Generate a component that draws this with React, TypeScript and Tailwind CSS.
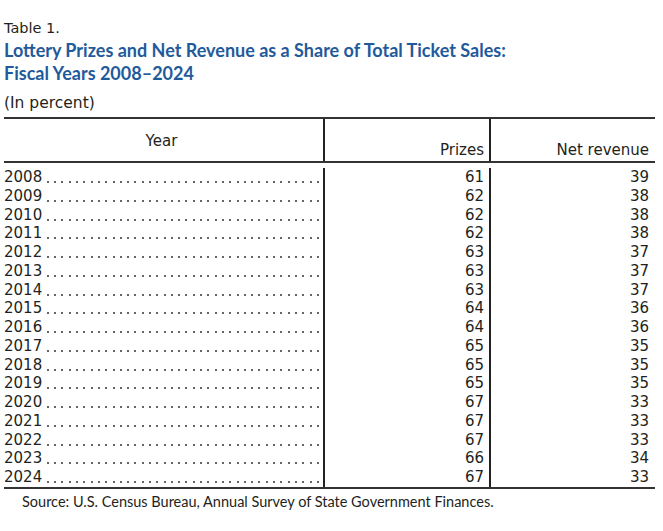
const rows: [number, number, number][] = [
  [2008, 61, 39],
  [2009, 62, 38],
  [2010, 62, 38],
  [2011, 62, 38],
  [2012, 63, 37],
  [2013, 63, 37],
  [2014, 63, 37],
  [2015, 64, 36],
  [2016, 64, 36],
  [2017, 65, 35],
  [2018, 65, 35],
  [2019, 65, 35],
  [2020, 67, 33],
  [2021, 67, 33],
  [2022, 67, 33],
  [2023, 66, 34],
  [2024, 67, 33],
];

const leader = Array.from({ length: 38 }, (_, i) => i);

export default function App() {
  return (
    <div className="w-[663px] h-[531px] bg-white text-[#231f20] font-['DejaVu_Sans',sans-serif] px-[4px] pt-[18px]">
      <div className="text-[14.5px] leading-[20px]">Table 1.</div>
      <h1 className="text-[#1f5a9c] font-bold font-['Lato',sans-serif] text-[18px] leading-[23px] mt-[1px]">
        Lottery Prizes and Net Revenue as a Share of Total Ticket Sales:
        <br />
        Fiscal Years 2008–2024
      </h1>
      <div className="text-[15.5px] leading-[20px] mt-[8px]">(In percent)</div>

      {/* table */}
      <div className="w-[651px] mt-[4px] border-t-2 border-b-2 border-[#333] text-[15px]">
        <div className="flex h-[44px] border-b-2 border-[#333] leading-[18px]">
          <div className="w-[321px] border-r-2 border-[#222] flex justify-center pt-[13px] pr-[4px]">Year</div>
          <div className="w-[166px] border-r-2 border-[#222] flex items-end justify-end pr-[5px] pb-[2px]">Prizes</div>
          <div className="flex-1 flex items-end justify-end pr-[6px] pb-[2px]">Net revenue</div>
        </div>
        <div className="pt-[5px]">
          {rows.map(([y, p, n]) => (
            <div key={y} className="flex h-[18.75px] leading-[18.75px]">
              <div className="w-[321px] border-r-2 border-[#222] flex">
                <span>{y}</span>
                {/* dot leader */}
                <div className="flex-1 flex overflow-hidden ml-[2px] pt-[13px]">
                  {leader.map((i) => (
                    <span key={i} className="w-[7.3px] shrink-0 flex justify-center">
                      <span className="w-[2px] h-[2px] rounded-full bg-[#333]" />
                    </span>
                  ))}
                </div>
              </div>
              <div className="w-[166px] border-r-2 border-[#222] text-right pr-[5px]">{p}</div>
              <div className="flex-1 text-right pr-[6px]">{n}</div>
            </div>
          ))}
        </div>
      </div>
      <div className="font-['Lato',sans-serif] text-[14.5px] leading-[20px] mt-[3px] pl-[18px]">
        Source: U.S. Census Bureau, Annual Survey of State Government Finances.
      </div>
    </div>
  );
}
